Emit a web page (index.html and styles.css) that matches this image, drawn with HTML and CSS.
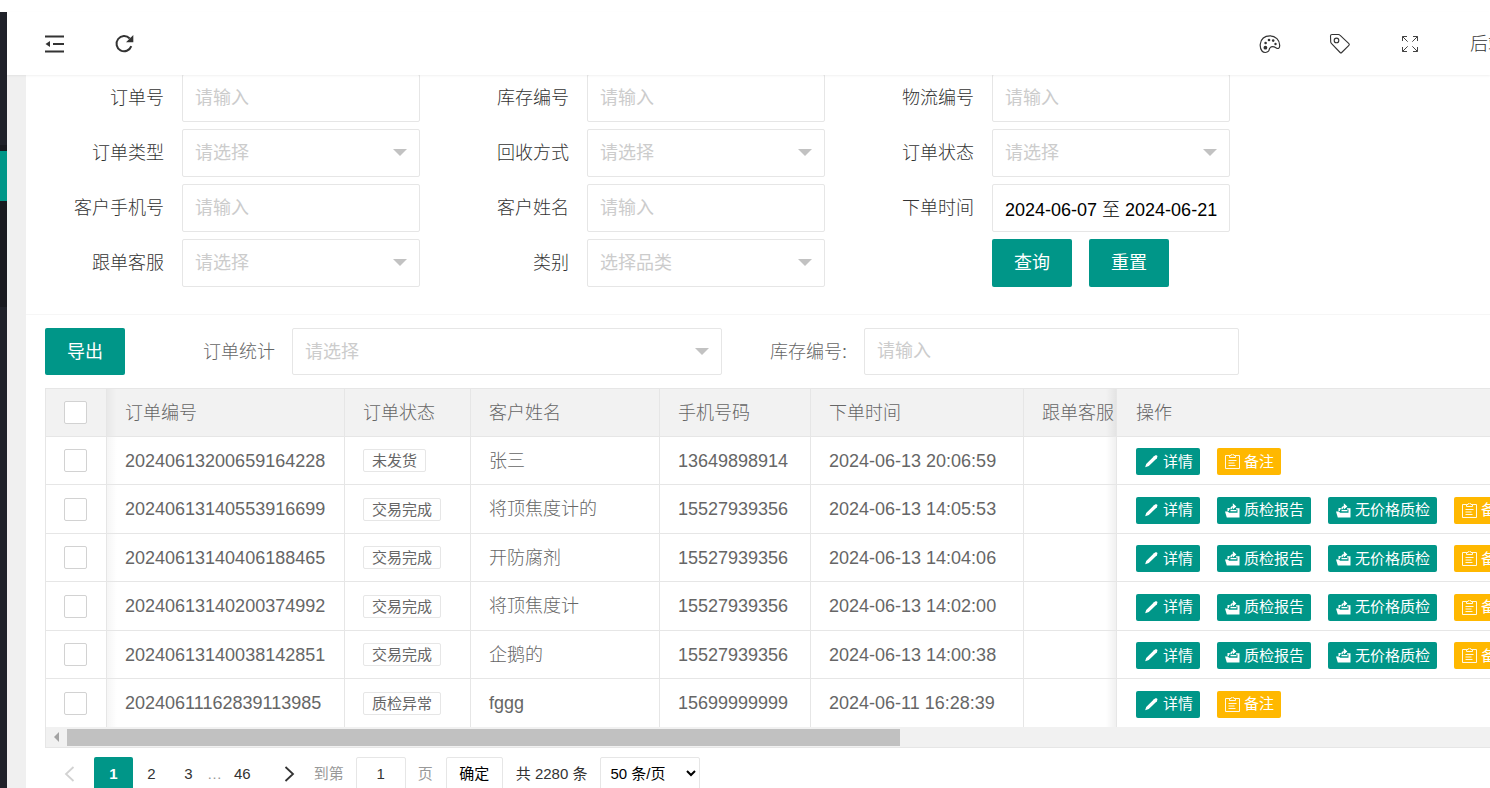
FILE: index.html
```html
<!DOCTYPE html>
<html lang="zh-CN">
<head>
<meta charset="utf-8">
<title>订单列表</title>
<link rel="stylesheet" href="styles.css">
</head>
<body>
<svg class="sprite" aria-hidden="true">
  <symbol id="pen" viewBox="0 0 15 15"><path d="M1.200 13.300l1-3.300 7.800-7.700 2-1.300 1.500.9-.6 2.300-8.100 7.900z" fill="currentColor"/></symbol>
  <symbol id="note" viewBox="0 0 15 15"><path d="M4.500 1.500H.5v13h14v-13h-4M4.500 3.500v-2h1.600a1.400 1.400 0 0 1 2.800 0h1.600v2zM3.500 6.500h8M3.500 9h6M3.500 11.500h7" fill="none" stroke="currentColor" stroke-width=".9"/></symbol>
  <symbol id="report" viewBox="0 0 15 15"><path d="M0 8.500h3l1 1.300h8.500V6.500H11V5.200h3.500v9.300H1.800z" fill="currentColor"/><path d="M3.200 8V5.700h1.600M6 6.200Q6 3.600 8.500 3.600" fill="none" stroke="currentColor" stroke-width="1.400"/><path d="M7.800.2l3.600 3.300-3.600 3zM5.500 7h6v1.200h-6z" fill="currentColor"/></symbol>
</svg>
<div class="app">
  <aside class="side"><div class="side-gap"></div><div class="side-line"></div><div class="side-active"></div><div class="side-sub"></div></aside>
  <div class="main">
    <header class="header">
      <button class="tool" aria-label="收起菜单"><svg width="20" height="20" viewBox="0 0 20 20"><path d="M1 2.500h19M9 10h11M1 17.500h19" stroke="#333" stroke-width="2"/><path d="M1.500 10L6 7v6z" fill="#333"/></svg></button>
      <button class="tool" aria-label="刷新"><svg width="20" height="20" viewBox="0 0 20 20"><path d="M17.300 12.200a7.600 7.600 0 1 1-1.600-7.700" fill="none" stroke="#333" stroke-width="2"/><path d="M19.300 1v7.200h-7.300z" fill="#333"/></svg></button>
      <nav class="header-right">
        <button class="tool" aria-label="主题"><svg width="22" height="20" viewBox="0 0 22 20"><path d="M9.5 17.2C7.8 19 4.6 18.9 3 17 1.300 15 1 12.500 1.300 10 2 5 5.500 1.800 11 1.800S20.800 6 20.700 11.500c0 2.800-1.500 3.600-3.400 2.500-2.500-1.500-5-1.700-6.300-.2-1 1.100-.6 2.300-1.500 3.400z" fill="none" stroke="#333" stroke-width="1.200"/><circle cx="6.400" cy="13.700" r="1.900" fill="#333"/><circle cx="6.600" cy="9" r="1.300" fill="#333"/><circle cx="10" cy="6" r="1.300" fill="#333"/><circle cx="14.200" cy="6.600" r="1.300" fill="#333"/><circle cx="16.500" cy="10" r="1.200" fill="#333"/></svg></button>
        <button class="tool" aria-label="便签"><svg width="22" height="22" viewBox="0 0 22 22"><path d="M1.500 3q0-1.500 1.500-1.500h6.500q.8 0 1.400.6l9 8.600q.8.800 0 1.600l-7.200 7.200q-.8.800-1.600 0l-8.500-8.800q-.9-.8-.9-2z" fill="none" stroke="#333" stroke-width="1.100"/><circle cx="7.500" cy="7.400" r="2.300" fill="none" stroke="#333" stroke-width="1.100"/></svg></button>
        <button class="tool" aria-label="全屏"><svg width="18" height="18" viewBox="0 0 18 18"><path d="M1.500 6V1.500H6M1.500 1.500l5.200 5.200M12 1.500h4.500V6M16.500 1.500l-5.200 5.200M1.500 12v4.500H6M1.500 16.500l5.200-5.200M12 16.500h4.500V12M16.500 16.500l-5.200-5.200" fill="none" stroke="#444"/></svg></button>
        <a class="user" href="#">后端</a>
      </nav>
    </header>
    <div class="content">
      <section class="card">
        <form class="search">
          <div class="field"><label for="f1">订单号</label><input class="box" id="f1" placeholder="请输入"></div>
          <div class="field"><label for="f2">库存编号</label><input class="box" id="f2" placeholder="请输入"></div>
          <div class="field"><label for="f3">物流编号</label><input class="box" id="f3" placeholder="请输入"></div>
          <div class="field"><label for="f4">订单类型</label><span class="pick"><select class="box" id="f4"><option>请选择</option></select></span></div>
          <div class="field"><label for="f5">回收方式</label><span class="pick"><select class="box" id="f5"><option>请选择</option></select></span></div>
          <div class="field"><label for="f6">订单状态</label><span class="pick"><select class="box" id="f6"><option>请选择</option></select></span></div>
          <div class="field"><label for="f7">客户手机号</label><input class="box" id="f7" placeholder="请输入"></div>
          <div class="field"><label for="f8">客户姓名</label><input class="box" id="f8" placeholder="请输入"></div>
          <div class="field"><label for="f9">下单时间</label><input class="box" id="f9" value="2024-06-07 至 2024-06-21"></div>
          <div class="field"><label for="f10">跟单客服</label><span class="pick"><select class="box" id="f10"><option>请选择</option></select></span></div>
          <div class="field"><label for="f11">类别</label><span class="pick"><select class="box" id="f11"><option>选择品类</option></select></span></div>
          <div class="buttons"><button class="btn" type="button">查询</button><button class="btn" type="button">重置</button></div>
        </form>
        <div class="toolbar">
          <button class="btn" type="button">导出</button>
          <label class="stat-label" for="t1">订单统计</label><span class="pick stat"><select class="box" id="t1"><option>请选择</option></select></span>
          <label class="stock-label" for="t2">库存编号:</label><input class="box stock" id="t2" placeholder="请输入">
        </div>
        <div class="grid">
          <table>
            <colgroup><col class="c-check"><col class="c-no"><col class="c-state"><col class="c-name"><col class="c-phone"><col class="c-time"><col class="c-agent"><col></colgroup>
            <thead><tr><th><input type="checkbox" aria-label="全选"></th><th>订单编号</th><th>订单状态</th><th>客户姓名</th><th>手机号码</th><th>下单时间</th><th>跟单客服</th><th>操作</th></tr></thead>
            <tbody id="rows"></tbody>
          </table>
          <div class="scrollbar"><span class="scroll-arrow"></span><span class="thumb"></span></div>
        </div>
        <div class="pager">
          <button class="page nav off" aria-label="上一页"><svg width="11" height="16" viewBox="0 0 11 16"><path d="M9.500 1L2 8l7.500 7" fill="none" stroke="currentColor" stroke-width="1.800"/></svg></button>
          <button class="page on">1</button><button class="page">2</button><button class="page">3</button><span class="dots">…</span><button class="page">46</button>
          <button class="page nav" aria-label="下一页"><svg width="11" height="16" viewBox="0 0 11 16"><path d="M1.500 1L9 8l-7.500 7" fill="none" stroke="currentColor" stroke-width="1.800"/></svg></button>
          <label class="jump">到第 <input value="1"> 页</label>
          <button class="confirm">确定</button>
          <span class="total">共 2280 条</span>
          <select class="limit" aria-label="每页条数"><option>50 条/页</option></select>
        </div>
      </section>
    </div>
  </div>
</div>
<script src="rows.js"></script>
</body>
</html>
```

FILE: rows.js
```js
const orders = [
  ["20240613200659164228", "未发货", "张三", "13649898914", "2024-06-13 20:06:59", false],
  ["20240613140553916699", "交易完成", "将顶焦度计的", "15527939356", "2024-06-13 14:05:53", true],
  ["20240613140406188465", "交易完成", "开防腐剂", "15527939356", "2024-06-13 14:04:06", true],
  ["20240613140200374992", "交易完成", "将顶焦度计", "15527939356", "2024-06-13 14:02:00", true],
  ["20240613140038142851", "交易完成", "企鹅的", "15527939356", "2024-06-13 14:00:38", true],
  ["20240611162839113985", "质检异常", "fggg", "15699999999", "2024-06-11 16:28:39", false]
];
const action = (icon, text, kind = "") =>
  `<button class="action ${kind}"><svg width="15" height="15"><use href="#${icon}"/></svg>${text}</button>`;
document.getElementById("rows").innerHTML = orders.map(([no, state, name, phone, time, checked]) =>
  `<tr><td><input type="checkbox" aria-label="${no}"></td><td>${no}</td><td><span class="tag">${state}</span></td>
  <td>${name}</td><td>${phone}</td><td>${time}</td><td></td><td><div class="actions">${action("pen", "详情")}${
    checked ? action("report", "质检报告") + action("report", "无价格质检") : ""}${action("note", "备注", "warn")}</div></td></tr>`
).join("");
```

FILE: styles.css
```css
* { box-sizing: border-box; }
body, button, input, select {
  font-family: "Liberation Sans", "Noto Sans CJK SC", sans-serif;
  font-size: 18px;
  font-weight: 300;
  line-height: 22px;
}
body { margin: 0; color: #333; background: #fff; overflow: hidden; }
button { padding: 0; border: 0; background: none; color: inherit; cursor: pointer; }
svg { display: block; flex: none; }
.sprite { display: none; }
.app { display: flex; height: 100vh; padding-top: 12px; }

.side { display: flex; flex-direction: column; flex: none; width: 7px; background: #20222a; }
.side-gap { height: 133px; }
.side-line { height: 6px; background: #191a20; }
.side-active { height: 50px; background: #009688; }
.side-sub { height: 106px; background: #191a20; }

.main { display: flex; flex-direction: column; flex: 1; min-width: 0; background: #f0f0f0; }
.header {
  display: flex;
  flex: none;
  align-items: flex-start;
  height: 63px;
  padding-left: 12px;
  background: #fff;
  box-shadow: 0 1px 2px rgba(0, 0, 0, .06);
  z-index: 1;
}
.tool { display: flex; align-items: center; justify-content: center; width: 70px; height: 63px; }
.header-right { display: flex; align-items: center; margin-left: auto; }
.user { width: 45px; padding-left: 25px; overflow: hidden; white-space: nowrap; color: #333; text-decoration: none; }

.content { flex: 1; min-height: 0; padding-left: 19px; overflow: hidden; }
.card { height: 100%; background: #fff; }
.card::before { content: ""; display: table; }
.search {
  display: grid;
  grid-template-columns: repeat(3, 375px);
  gap: 7px 30px;
  margin-top: -1px;
  padding: 0 19px 27px;
  border-bottom: 1px solid #f6f6f6;
}
.field { display: flex; align-items: center; }
.field label { width: 137px; padding-right: 18px; text-align: right; white-space: nowrap; }
.box {
  display: block;
  flex: 1;
  width: 100%;
  min-width: 0;
  height: 48px;
  padding: 0 12px;
  border: 1px solid #e6e6e6;
  border-radius: 2px;
  background: #fff;
  color: #000;
  outline: 0;
}
.box::placeholder { color: #ccc; opacity: 1; font-weight: 400; }
select.box { appearance: none; color: #ccc; font-weight: 400; }
.pick { position: relative; display: block; flex: 1; }
.pick::after {
  content: "";
  position: absolute;
  top: 20px;
  right: 13px;
  border: 7px solid transparent;
  border-top-color: #c2c2c2;
  border-bottom: 0;
  pointer-events: none;
}
.buttons { display: flex; gap: 17px; padding-left: 137px; align-items: center; }
.btn { width: 80px; height: 48px; border-radius: 2px; background: #009688; color: #fff; font-weight: 400; }

.toolbar { display: flex; align-items: center; padding: 13px 19px; color: #666; }
.toolbar .btn, .toolbar .box { height: 47px; }
.stat-label { margin: 0 17px 0 78px; }
.stat { flex: 0 1 430px; }
.stock-label { margin: 0 17px 0 48px; }
.stock { flex: 0 1 375px; }

.grid { margin-left: 19px; border: 1px solid #e6e6e6; border-right: 0; overflow: hidden; color: #666; }
table { width: 1600px; table-layout: fixed; border-collapse: separate; border-spacing: 0; }
.c-check { width: 61px; }
.c-no { width: 238px; }
.c-state { width: 126px; }
.c-name { width: 189px; }
.c-phone { width: 151px; }
.c-time { width: 213px; }
.c-agent { width: 93px; }
th, td {
  height: 48px;
  padding: 0 0 0 18px;
  border-right: 1px solid #e6e6e6;
  border-bottom: 1px solid #e6e6e6;
  font-weight: 300;
  text-align: left;
  white-space: nowrap;
}
th:last-child, td:last-child { padding-left: 19px; }
tbody tr:nth-child(even) td { height: 49px; }
tbody tr:last-child td { height: 48px; border-bottom: 0; }
th { background-color: #f2f2f2; }
th:nth-child(2), td:nth-child(2) { background-image: linear-gradient(to right, rgba(0, 0, 0, .04), transparent 10px); }
th:nth-child(7), td:nth-child(7) { background-image: linear-gradient(to left, rgba(0, 0, 0, .06), transparent 10px); }
table input {
  display: block;
  appearance: none;
  width: 23px;
  height: 23px;
  margin: 0;
  border: 1px solid #d2d2d2;
  border-radius: 2px;
  background: #fff;
}
.tag {
  display: block;
  width: fit-content;
  height: 23px;
  padding: 0 8px;
  border: 1px solid #e6e6e6;
  border-radius: 2px;
  font-size: 15px;
  font-weight: 400;
  line-height: 22px;
}
.actions { display: flex; gap: 17px; padding-top: 2px; }
.action {
  display: flex;
  align-items: center;
  gap: 4px;
  height: 27px;
  padding: 0 7px 0 8px;
  border-radius: 2px;
  background: #009688;
  color: #fff;
  font-size: 15px;
  font-weight: 400;
}
.warn { background: #ffb800; }
.scrollbar { display: flex; align-items: center; height: 20px; padding-left: 8px; background: #f1f1f1; }
.scroll-arrow { border: 5px solid transparent; border-right-color: #a3a3a3; border-left: 0; }
.thumb { width: 58%; height: 17px; margin-left: 8px; background: #c1c1c1; }

.pager { display: flex; align-items: center; padding: 9px 0 0 19px; }
.pager, .pager button, .pager input, .pager select { font-size: 15px; font-weight: 400; }
.page { display: flex; align-items: center; justify-content: center; flex: none; min-width: 37px; height: 33px; padding: 0 14px; }
.nav { width: 49px; }
.off { color: #d2d2d2; }
.pager .on { min-width: 39px; border-radius: 2px; background: #009688; color: #fff; font-weight: 700; }
.dots { width: 13px; color: #999; text-align: center; }
.jump { display: flex; align-items: center; gap: 12px; color: #999; white-space: nowrap; }
.jump input { width: 50px; height: 33px; border: 1px solid #e6e6e6; border-radius: 2px; color: #333; text-align: center; }
.confirm, .limit { height: 33px; border: 1px solid #e6e6e6; border-radius: 2px; background: #fff; color: #000; }
.confirm { width: 57px; margin: 0 13px; }
.total { white-space: nowrap; }
.limit { width: 100px; margin-left: 13px; padding: 0 5px; }
```
